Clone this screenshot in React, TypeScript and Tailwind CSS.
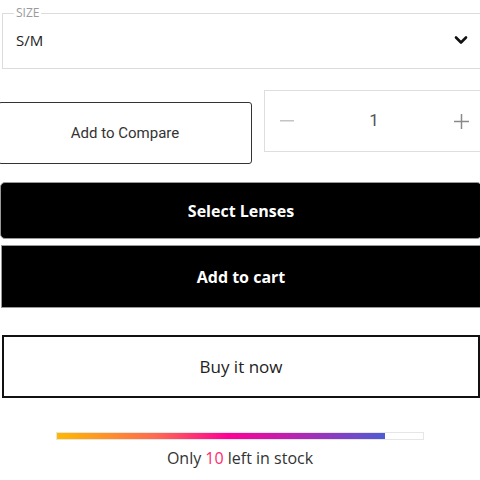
import { useState } from "react";

const STOCK_LEFT = 10;
const STOCK_PCT = 89.5;

function ChevronDown() {
  return (
    <svg width="14" height="10" viewBox="0 0 14 10" aria-hidden="true">
      <polyline points="2,2.5 7,7.5 12,2.5" fill="none" stroke="#111" strokeWidth="2.6" strokeLinecap="round" strokeLinejoin="round" />
    </svg>
  );
}

export default function App() {
  const [qty, setQty] = useState(1);

  return (
    <div className="w-[480px] h-[480px] overflow-hidden bg-white">
      <div className="w-[490px] flex flex-col">
        {/* size picker */}
        <fieldset className="ml-[2px] mt-[7px] h-[62px] border border-[#dcdcdc] pl-[11px] pr-[20px]">
          <legend className="px-[2px] text-[12px] leading-[12px] text-[#9a9a9a] font-['Open_Sans',sans-serif]">
            SIZE
          </legend>
          <div className="flex items-center justify-between pl-[2px] pt-[11px] w-[454px]">
            <span className="text-[15px] leading-5 text-[#222] font-['Open_Sans',sans-serif]">S/M</span>
            <ChevronDown />
          </div>
        </fieldset>

        {/* compare + quantity */}
        <div className="mt-[21px] flex items-start gap-3 -ml-[2px]">
          <button
            type="button"
            className="shrink-0 mt-3 h-[62px] w-[254px] rounded-[3px] border-[1.5px] border-[#333] bg-white text-[15px] text-[#333] font-['Roboto',sans-serif]"
          >
            Add to Compare
          </button>
          <div className="shrink-0 h-[62px] w-[230px] flex items-center border border-[#dedede] font-['Roboto',sans-serif]">
            <button type="button" onClick={() => setQty(Math.max(1, qty - 1))} className="w-[44px] h-full flex items-center justify-center">
              <svg width="14" height="2" viewBox="0 0 14 2" aria-hidden="true">
                <rect width="14" height="1.5" fill="#c4c4c4" />
              </svg>
            </button>
            <span className="w-[130px] text-center text-[17px] text-[#555]">{qty}</span>
            <button type="button" onClick={() => setQty(qty + 1)} className="w-[44px] h-full flex items-center justify-center">
              <svg width="15" height="15" viewBox="0 0 15 15" aria-hidden="true">
                <rect x="0" y="6.75" width="15" height="1.5" fill="#8a8a8a" />
                <rect x="6.75" y="0" width="1.5" height="15" fill="#8a8a8a" />
              </svg>
            </button>
          </div>
        </div>

        {/* main actions */}
        <button
          type="button"
          className="mt-[18px] h-[57px] w-[482px] rounded-[5px] border border-[#999] bg-black text-white text-[16px] font-bold font-['Open_Sans',sans-serif]"
        >
          Select Lenses
        </button>
        <button
          type="button"
          className="mt-[6px] ml-[1px] h-[63px] w-[480px] border border-[#999] bg-black text-white text-[16px] font-bold font-['Open_Sans',sans-serif]"
        >
          Add to cart
        </button>
        <button
          type="button"
          className="mt-[27px] ml-[2px] h-[63px] w-[478px] border-2 border-[#111] bg-white text-[#222] text-[17px] font-medium font-['Open_Sans',sans-serif]"
        >
          Buy it now
        </button>

        {/* stock meter */}
        <div className="w-[480px] flex flex-col items-center">
          <div className="mt-[34px] h-[8px] w-[368px] border border-[#e6e6e6] bg-white">
            <div
              className="h-full bg-[linear-gradient(90deg,#ffb800_0%,#ff6a50_30%,#ff0096_52%,#c01fb0_70%,#4f5bd5_100%)]"
              style={{ width: `${STOCK_PCT}%` }}
            />
          </div>
          <p className="mt-[8px] text-[16px] leading-5 text-[#333] font-['Open_Sans',sans-serif]">
            Only <span className="text-[#ff2a6d]">{STOCK_LEFT}</span> left in stock
          </p>
        </div>
      </div>
    </div>
  );
}
